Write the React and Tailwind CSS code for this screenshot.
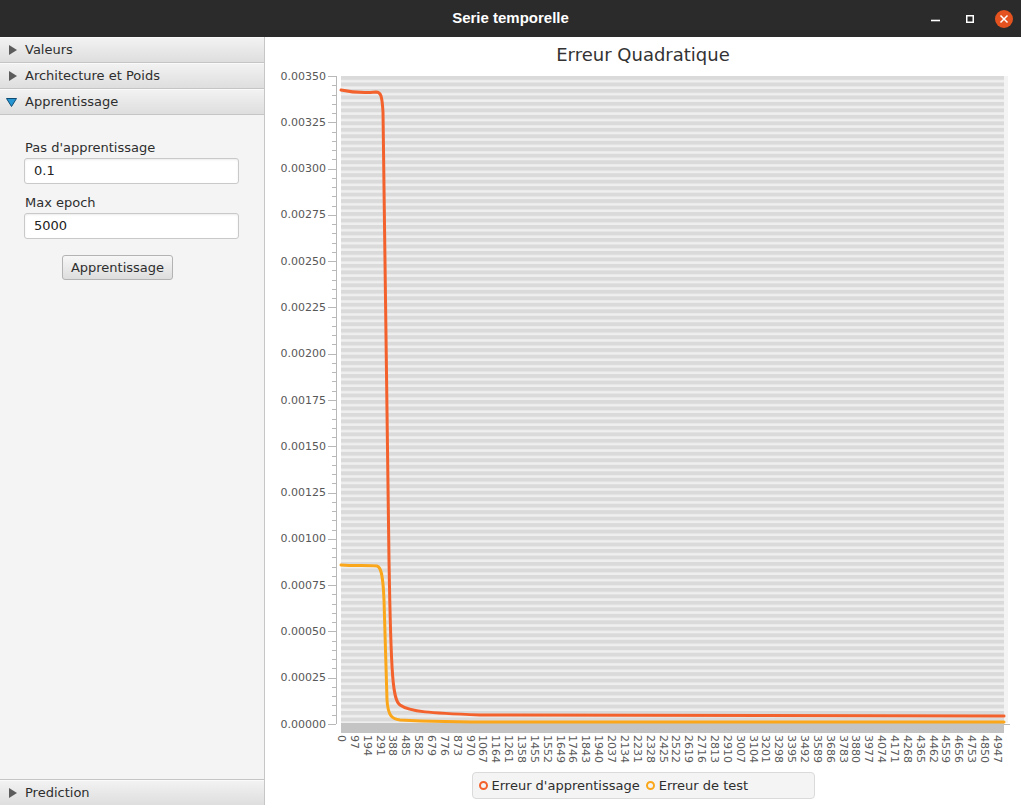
import React from 'react';

const xLabels = Array.from({ length: 52 }, (_, i) => i * 97);
const yLabels = Array.from({ length: 15 }, (_, i) => i * 0.00025);

const plotTop = 76;
const plotBottom = 724;
const yOf = (v) => plotBottom - (v / 0.0035) * (plotBottom - plotTop);

const redPath =
  'M341,90 C350,92 365,93 376,92 C381,92 382,96 383,112 L389,560 C391,680 393,700 400,705 C410,712 430,713 480,715 L1004,716';
const yellowPath =
  'M341,565 C355,566 370,565 377,566 C381,567 383,575 384,600 L387,700 C388,716 392,719 400,720 C420,721 450,722 500,722 L1004,722';

const PaneHeader = ({ title, open, bordered }) => (
  <div
    className={`h-[26px] flex items-center gap-[8px] pt-[1px] ${open ? 'pl-[6px]' : 'pl-[9px]'} ${
      bordered ? 'border-t border-[#c5c5c5]' : 'border-b border-[#c5c5c5]'
    } bg-linear-to-b from-[#f3f3f3] to-[#dedede] shadow-[inset_0_1px_0_#fafafa] text-[13px] text-[#2e2e2e]`}
  >
    {open ? (
      <svg width="11" height="9" viewBox="0 0 11 9">
        <path d="M0.5,0.5 L10.5,0.5 L5.5,8.5 Z" fill="#2596d2" stroke="#0f4c74" strokeWidth="1" />
      </svg>
    ) : (
      <svg width="8" height="10" viewBox="0 0 8 10">
        <path d="M0,0 L8,5 L0,10 Z" fill="#5c5c5c" />
      </svg>
    )}
    <span>{title}</span>
  </div>
);

const Field = ({ label, value, className = '' }) => (
  <div className={className}>
    <div className="pl-[25px] h-[16px] leading-[16px] text-[13px] text-[#2e2e2e] mb-[2px]">{label}</div>
    <div className="ml-[24px] w-[215px] h-[26px] bg-white border border-[#c9c9c9] rounded-[3px] shadow-[inset_0_1px_2px_rgba(0,0,0,0.08)] flex items-center pl-[9px] text-[13px] text-[#222]">
      {value}
    </div>
  </div>
);

function Chart() {
  return (
    <svg width="756" height="703" viewBox="265 67 756 703" fontFamily="DejaVu Sans, sans-serif">
      <defs>
        <pattern id="rows" patternUnits="userSpaceOnUse" x="341" y="76" width="10" height="6.48">
          <rect width="10" height="4.3" fill="#dadada" />
          <rect y="4.3" width="10" height="2.18" fill="#efefef" />
        </pattern>
      </defs>
      <rect x="341" y="76" width="663" height="647" fill="url(#rows)" />
      <rect x="1004" y="76" width="4" height="647" fill="#f3f3f3" />
      <rect x="341" y="723" width="663" height="10" fill="#c4c4c4" />
      <line x1="1004" y1="724.5" x2="1010" y2="724.5" stroke="#b8b8b8" />

      <line x1="336.5" y1="76" x2="336.5" y2="724" stroke="#b8b8b8" />
      {Array.from({ length: 71 }, (_, i) => {
        const y = Math.round(plotBottom - i * (648 / 70)) + 0.5;
        const major = i % 5 === 0;
        return <line key={i} x1={major ? 328 : 332} y1={y} x2="336" y2={y} stroke="#b8b8b8" />;
      })}
      {yLabels.map((v) => (
        <text key={v} x="326" y={yOf(v)} textAnchor="end" dominantBaseline="central" fontSize="11" fill="#585858">
          {v.toFixed(5)}
        </text>
      ))}

      {xLabels.map((v, i) => {
        const cx = 341.5 + i * 12.86;
        return (
          <text
            key={v}
            x={cx}
            y="735"
            transform={`rotate(90 ${cx} 735)`}
            dominantBaseline="central"
            fontSize="11"
            fill="#585858"
          >
            {v}
          </text>
        );
      })}

      <path d={yellowPath} fill="none" stroke="#fba71b" strokeWidth="3" strokeLinejoin="round" strokeLinecap="round" />
      <path d={redPath} fill="none" stroke="#f3622d" strokeWidth="3" strokeLinejoin="round" strokeLinecap="round" />
    </svg>
  );
}

const LegendItem = ({ color, label }) => (
  <div className="flex items-center gap-[4px]">
    <span className="w-[9px] h-[9px] rounded-full border-[2px]" style={{ borderColor: color }} />
    <span>{label}</span>
  </div>
);

export default function App() {
  return (
    <div className="w-[1021px] h-[805px] flex flex-col font-['DejaVu_Sans',sans-serif] overflow-hidden">
      {/* title bar */}
      <div className="h-[37px] bg-[#2b2b2b] grid grid-cols-[1fr_auto_1fr] items-center">
        <div />
        <div className="text-white font-bold text-[15px] font-['Liberation_Sans',sans-serif]">Serie temporelle</div>
        <div className="flex items-center justify-end pr-[8px]">
          <svg width="9" height="10" viewBox="0 0 9 10">
            <line x1="0" y1="6.5" x2="9" y2="6.5" stroke="white" strokeWidth="1.6" />
          </svg>
          <svg width="8" height="8" viewBox="0 0 8 8" className="ml-[26px]">
            <rect x="0.75" y="0.75" width="6.5" height="6.5" fill="none" stroke="white" strokeWidth="1.5" />
          </svg>
          <svg width="18" height="18" viewBox="0 0 18 18" className="ml-[21px]">
            <circle cx="9" cy="9" r="9" fill="#e4531f" />
            <path d="M5.5,5.5 L12.5,12.5 M12.5,5.5 L5.5,12.5" stroke="white" strokeWidth="1.5" />
          </svg>
        </div>
      </div>

      <div className="flex-1 flex min-h-0">
        {/* left accordion */}
        <div className="w-[265px] border-r border-[#c6c6c6] bg-[#f4f4f4] flex flex-col">
          <PaneHeader title="Valeurs" />
          <PaneHeader title="Architecture et Poids" />
          <PaneHeader title="Apprentissage" open />
          <div className="flex-1 pt-[25px]">
            <Field label="Pas d'apprentissage" value="0.1" />
            <Field label="Max epoch" value="5000" className="mt-[11px]" />
            <button className="mt-[16px] ml-[62px] w-[111px] h-[25px] rounded-[3px] border border-[#b3b3b3] bg-linear-to-b from-[#f7f7f7] to-[#dddddd] text-[13px] text-[#2e2e2e]">
              Apprentissage
            </button>
          </div>
          <PaneHeader title="Prediction" bordered />
        </div>

        {/* chart */}
        <div className="flex-1 bg-white flex flex-col items-center">
          <div className="h-[30px] pt-[6px] flex items-center justify-center text-[18px] leading-[24px] text-[#333]">
            Erreur Quadratique
          </div>
          <Chart />
          <div className="mt-[2px] w-[343px] h-[27px] bg-[#f4f4f4] border border-[#dadada] rounded-[4px] flex items-center gap-[6px] pl-[6px] text-[13px] text-[#2e2e2e]">
            <LegendItem color="#f3622d" label="Erreur d'apprentissage" />
            <LegendItem color="#fba71b" label="Erreur de test" />
          </div>
        </div>
      </div>
    </div>
  );
}
